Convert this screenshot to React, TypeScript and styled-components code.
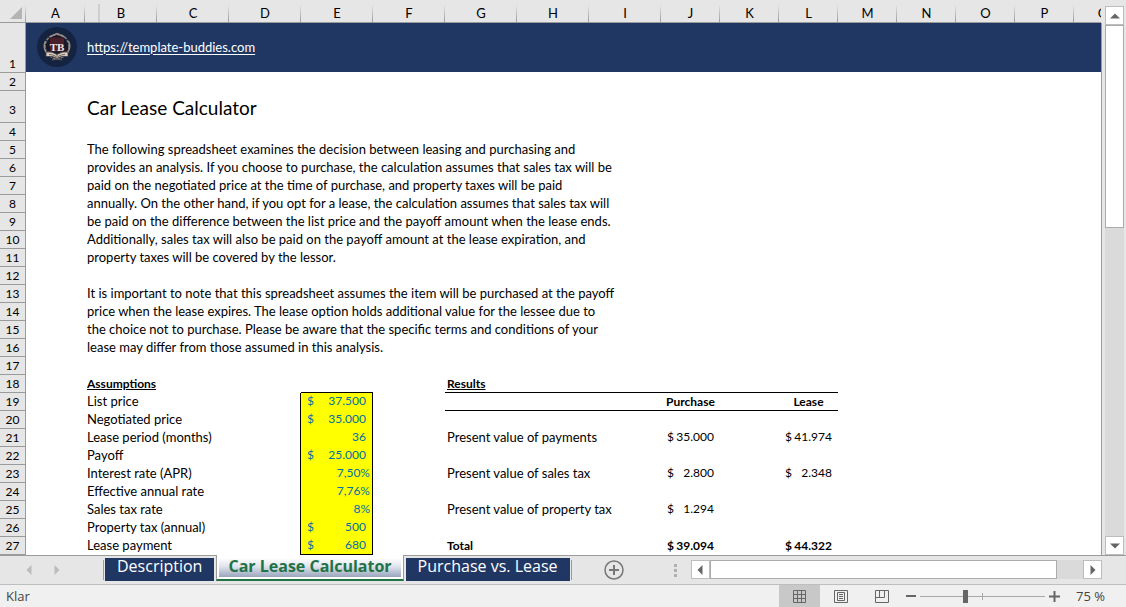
import React from "react";
import styled, { createGlobalStyle, css } from "styled-components";

const cellFont = `Lato, "Liberation Sans", sans-serif`;
const uiFont = `"Open Sans", "Noto Sans", sans-serif`;
const navy = "#203764";
const line = "#9b9b9b";

const GlobalStyle = createGlobalStyle`
  *, *::before, *::after { box-sizing: border-box; }
  body { margin: 0; background: #e6e6e6; }
  button { font: inherit; border: 0; padding: 0; background: none; }
`;

const Window = styled.div`
  display: flex;
  flex-direction: column;
  height: 100vh;
  overflow: hidden;
  background: #e6e6e6;
`;

const Workspace = styled.main`
  flex: 1;
  min-height: 0;
  display: flex;
`;

const SheetView = styled.div`
  flex: 1;
  min-width: 0;
  overflow: hidden;
`;

const Sheet = styled.table`
  table-layout: fixed;
  width: 100%;
  min-width: 1132px;
  border-spacing: 0;
  background: #fff;
  color: #000;
  font: 13px/14px ${cellFont};
`;

const Col = styled.col<{ $w?: number }>`
  width: ${(p) => (p.$w ? `${p.$w}px` : "auto")};
`;

const ColumnHead = styled.th<{ $marked?: boolean }>`
  height: 23px;
  padding: 4px 0 0;
  font-weight: 400;
  font-size: 13px;
  background:
    linear-gradient(#e6e6e6, ${line}) right 4px / 1px 18px no-repeat,
    linear-gradient(#cecece, #cecece) 13px 4px / ${(p) => (p.$marked ? "2px" : "0")} 18px no-repeat,
    #e6e6e6;
  border-bottom: 1px solid ${line};
`;

const Corner = styled(ColumnHead)`
  padding: 0 4px 3px 0;
  text-align: right;
  vertical-align: bottom;
  svg { display: block; margin-left: auto; }
`;

const RowHead = styled.th<{ $raised?: boolean }>`
  padding: 0 0 ${(p) => (p.$raised ? "5px" : "1px")};
  vertical-align: bottom;
  font-weight: 400;
  font-size: 12px;
  background: #e6e6e6;
  border-right: 1px solid ${line};
  border-bottom: 1px solid ${line};
`;

const Row = styled.tr<{ $h?: number }>`
  height: ${(p) => p.$h ?? 18}px;
`;

type CellProps = {
  $bold?: boolean;
  $center?: boolean;
  $under?: boolean;
  $side?: boolean;
  $input?: boolean;
};

const Cell = styled.td<CellProps>`
  padding: 0 2px 2px;
  white-space: nowrap;
  vertical-align: middle;
  text-align: ${(p) => (p.$center ? "center" : "left")};
  ${(p) => p.$bold && css`font-weight: 700; font-size: 12px; padding-bottom: 0;`}
  ${(p) => p.$under && css`border-bottom: 1px solid #000;`}
  ${(p) => p.$side && css`border-right: 1px solid #000;`}
  ${(p) => p.$input && css`background: #ff0; color: #0070a8;`}
`;

const BannerCell = styled.td`
  padding: 0 2px 2px;
  background: ${navy};
  border-bottom: 1px solid #fff;
  vertical-align: middle;
`;

const LogoCell = styled(BannerCell)`
  padding: 0 0 2px 11px;
  svg { display: block; }
`;

const SiteLink = styled.a`
  color: #fff;
  font-size: 13px;
  text-underline-offset: 2px;
`;

const Title = styled.h1`
  margin: 0;
  padding-top: 4px;
  font-size: 19px;
  line-height: 24px;
  font-weight: 400;
`;

const Heading = styled.span`
  text-decoration: underline;
`;

const Amount = styled.span<{ $percent?: boolean }>`
  display: flex;
  justify-content: space-between;
  padding: ${(p) => (p.$percent ? "0" : "0 4px")};
  font-size: 12px;
`;

const VScroll = styled.div`
  width: 25px;
  padding: 6px 3px 0 4px;
  display: flex;
  flex-direction: column;
  background: linear-gradient(${line}, ${line}) 0 23px / 1px 100% no-repeat #e6e6e6;
`;

const ScrollButton = styled.button`
  width: 19px;
  height: 19px;
  flex: none;
  display: flex;
  align-items: center;
  justify-content: center;
  background: #fff;
  border: 1px solid #bdbdbd;
`;

const VTrack = styled.div`
  flex: 1;
  width: 19px;
  background: #dadada;
`;

const VThumb = styled.div`
  height: 203px;
  background: #fff;
  border: 1px solid #ababab;
`;

const TabBar = styled.div`
  flex: none;
  height: 29px;
  display: flex;
  background: #e6e6e6;
`;

const Edge = styled.div<{ $w?: number }>`
  flex: ${(p) => (p.$w ? "none" : "1")};
  width: ${(p) => (p.$w ? `${p.$w}px` : "auto")};
  border-top: 1px solid ${line};
  display: flex;
`;

const NavArrows = styled(Edge)`
  padding: 0 0 0 24px;
  gap: 18px;
  align-items: center;
  button { display: flex; }
`;

const TabSlot = styled.div`
  flex: none;
  padding: 2px 2px 4px;
  border-top: 1px solid ${line};
  background: linear-gradient(${line}, ${line}) var(--side, left) 4px / 1px 20px no-repeat;
`;

const LastSlot = styled(TabSlot)`
  --side: right;
`;

const Tab = styled.button`
  height: 23px;
  padding: 0 12px 8px;
  display: flex;
  align-items: center;
  background: ${navy};
  color: #fff;
  font: 16px/16px ${uiFont};
`;

const ActiveTab = styled.button`
  flex: none;
  height: 26px;
  border: solid ${line};
  border-width: 0 1px;
  padding: 3px 2px 2px;
  background: #fff;
  border-bottom: 2px solid #217346;
`;

const ActiveLabel = styled.span`
  display: flex;
  align-items: center;
  height: 19px;
  padding: 0 9px 3px;
  background: linear-gradient(#fff, #dfe3ec 45%, #9aa5bd);
  color: #217346;
  font: 700 16px/18px ${uiFont};
`;

const AddArea = styled(Edge)`
  padding-left: 32px;
  align-items: center;
  justify-content: space-between;
  button { display: flex; }
`;

const HScroll = styled(Edge)`
  align-items: center;
  padding: 0 24px 1px 14px;
`;

const HTrack = styled.div`
  flex: 1;
  height: 19px;
  background: #dadada;
`;

const HThumb = styled.div`
  width: 93%;
  height: 19px;
  background: #fff;
  border: 1px solid #ababab;
`;

const StatusBar = styled.footer`
  flex: none;
  height: 23px;
  display: flex;
  align-items: center;
  padding: 0 21px 0 6px;
  border-top: 1px solid #bebebe;
  background: #f0f0f0;
  color: #444;
  font: 13px/16px ${uiFont};
`;

const StatusText = styled.span`
  flex: 1;
`;

const ViewButton = styled.button<{ $on?: boolean }>`
  width: 41px;
  height: 22px;
  display: flex;
  align-items: center;
  justify-content: center;
  background: ${(p) => (p.$on ? "#c8c8c8" : "transparent")};
`;

const ZoomButton = styled.button`
  display: flex;
  margin-left: 4px;
`;

const ZoomRange = styled.input`
  appearance: none;
  width: 125px;
  height: 13px;
  margin: 0 0 0 4px;
  background:
    linear-gradient(#a8a8a8, #a8a8a8) center / 1px 7px no-repeat,
    linear-gradient(#a8a8a8, #a8a8a8) center / 100% 1px no-repeat;
  &::-webkit-slider-thumb {
    appearance: none;
    width: 5px;
    height: 13px;
    background: #666;
  }
`;

const ZoomValue = styled.output`
  margin-left: 16px;
`;

const columns = "ABCDEFGHIJKLMNOPQ".split("");
const widths = [59, 72, 72, 72, 72, 72, 72, 72, 72, 59, 59, 59, 59, 59, 59, 59];

const notes: Record<number, string> = {
  5: "The following spreadsheet examines the decision between leasing and purchasing and",
  6: "provides an analysis. If you choose to purchase, the calculation assumes that sales tax will be",
  7: "paid on the negotiated price at the time of purchase, and property taxes will be paid",
  8: "annually. On the other hand, if you opt for a lease, the calculation assumes that sales tax will",
  9: "be paid on the difference between the list price and the payoff amount when the lease ends.",
  10: "Additionally, sales tax will also be paid on the payoff amount at the lease expiration, and",
  11: "property taxes will be covered by the lessor.",
  13: "It is important to note that this spreadsheet assumes the item will be purchased at the payoff",
  14: "price when the lease expires. The lease option holds additional value for the lessee due to",
  15: "the choice not to purchase. Please be aware that the specific terms and conditions of your",
  16: "lease may differ from those assumed in this analysis.",
};
const noteRows = [4, 5, 6, 7, 8, 9, 10, 11, 12, 13, 14, 15, 16, 17];

type Item = { label: string; sign?: string; value: string };
const assumptions: Item[] = [
  { label: "List price", sign: "$", value: "37.500" },
  { label: "Negotiated price", sign: "$", value: "35.000" },
  { label: "Lease period (months)", value: "36" },
  { label: "Payoff", sign: "$", value: "25.000" },
  { label: "Interest rate (APR)", value: "7,50%" },
  { label: "Effective annual rate", value: "7,76%" },
  { label: "Sales tax rate", value: "8%" },
  { label: "Property tax (annual)", sign: "$", value: "500" },
  { label: "Lease payment", sign: "$", value: "680" },
];

type Result = { label: string; purchase: string; lease?: string; bold?: boolean };
const results: Record<number, Result> = {
  21: { label: "Present value of payments", purchase: "35.000", lease: "41.974" },
  23: { label: "Present value of sales tax", purchase: "2.800", lease: "2.348" },
  25: { label: "Present value of property tax", purchase: "1.294" },
  27: { label: "Total", purchase: "39.094", lease: "44.322", bold: true },
};

const Triangle = ({ dir, color = "#666" }: { dir: "up" | "down" | "left" | "right"; color?: string }) => {
  const d = { up: "M0 7.5 5 2.5 10 7.5Z", down: "M0 2.5 5 7.5 10 2.5Z", left: "M7.5 0 2.5 5 7.5 10Z", right: "M2.5 0 7.5 5 2.5 10Z" }[dir];
  return (
    <svg width="10" height="10" aria-hidden="true"><path d={d} fill={color} /></svg>
  );
};

const Logo = () => (
  <svg width="40" height="40" viewBox="0 0 40 40" role="img" aria-label="Template Buddies">
    <circle cx="20" cy="20" r="20" fill="#14233f" />
    <circle cx="20" cy="19.5" r="12" fill="#17182a" stroke="#857c78" strokeWidth="1.6" strokeDasharray="3 1" />
    <path d="M12.5 10 20 6.5 27.5 10M8.5 14q-3 5.5 1 12M31.5 14q3 5.5-1 12" fill="none" stroke="#9a8f88" strokeWidth="1.4" />
    <path d="M13 10.5h14v14H13z" fill="#49202a" />
    <path d="M9 25q6-1 11 2.5 5-3.5 11-2.5v4.5q-7-1-11 2-4-3-11-2z" fill="#dccdbd" stroke="#403b43" strokeWidth=".8" />
    <path d="M20 27v6M12 27.5q4 0 7 2M28 27.5q-4 0-7 2M15 33q5-2 10 0" fill="none" stroke="#6b6162" />
    <text x="20" y="24" textAnchor="middle" fontFamily="Liberation Serif, serif" fontWeight="700" fontSize="11" fill="#e9e7ea">TB</text>
  </svg>
);

const Money = ({ value }: { value: string }) => (
  <Amount><span>$</span><span>{value}</span></Amount>
);

const ResultCells = ({ row }: { row: number }) => {
  if (row === 19) {
    return (
      <>
        <Cell colSpan={3} $under />
        <Cell $under $bold $center>Purchase</Cell>
        <Cell $under />
        <Cell $under $bold $center>Lease</Cell>
      </>
    );
  }
  const r = results[row];
  if (!r) return <Cell colSpan={6} />;
  return (
    <>
      <Cell colSpan={3} $bold={r.bold}>{r.label}</Cell>
      <Cell $bold={r.bold}><Money value={r.purchase} /></Cell>
      <Cell />
      <Cell $bold={r.bold}>{r.lease && <Money value={r.lease} />}</Cell>
    </>
  );
};

export default function App() {
  return (
    <Window>
      <GlobalStyle />
      <Workspace>
        <SheetView>
          <Sheet>
            <colgroup>
              <Col $w={26} />
              {widths.map((w, i) => <Col key={i} $w={w} />)}
              <Col />
            </colgroup>
            <thead>
              <tr>
                <Corner aria-label="Select all">
                  <svg width="12" height="12" aria-hidden="true"><path d="M12 0V12H0Z" fill="#b4b4b4" /></svg>
                </Corner>
                {columns.map((c) => <ColumnHead key={c} scope="col" $marked={c === "B"}>{c}</ColumnHead>)}
              </tr>
            </thead>
            <tbody>
              <Row $h={50}>
                <RowHead scope="row">1</RowHead>
                <LogoCell><Logo /></LogoCell>
                <BannerCell colSpan={16}>
                  <SiteLink href="https://template-buddies.com">https://template-buddies.com</SiteLink>
                </BannerCell>
              </Row>
              <Row>
                <RowHead scope="row">2</RowHead>
                <Cell colSpan={17} />
              </Row>
              <Row $h={32}>
                <RowHead scope="row" $raised>3</RowHead>
                <Cell />
                <Cell colSpan={16}><Title>Car Lease Calculator</Title></Cell>
              </Row>
              {noteRows.map((n) => (
                <Row key={n}>
                  <RowHead scope="row">{n}</RowHead>
                  <Cell />
                  <Cell colSpan={16}>{notes[n]}</Cell>
                </Row>
              ))}
              <Row>
                <RowHead scope="row">18</RowHead>
                <Cell />
                <Cell colSpan={3} $bold><Heading>Assumptions</Heading></Cell>
                <Cell $under />
                <Cell />
                <Cell colSpan={6} $bold $under><Heading>Results</Heading></Cell>
                <Cell colSpan={5} />
              </Row>
              {assumptions.map((a, i) => (
                <Row key={a.label}>
                  <RowHead scope="row">{i + 19}</RowHead>
                  <Cell />
                  <Cell colSpan={3} $side>{a.label}</Cell>
                  <Cell $input $side $under={i === assumptions.length - 1}>
                    <Amount $percent={a.value.endsWith("%")}>
                      <span>{a.sign}</span><span>{a.value}</span>
                    </Amount>
                  </Cell>
                  <Cell />
                  <ResultCells row={i + 19} />
                  <Cell colSpan={5} />
                </Row>
              ))}
            </tbody>
          </Sheet>
        </SheetView>
        <VScroll>
          <ScrollButton aria-label="Scroll up"><Triangle dir="up" /></ScrollButton>
          <VTrack><VThumb /></VTrack>
          <ScrollButton aria-label="Scroll down"><Triangle dir="down" /></ScrollButton>
        </VScroll>
      </Workspace>
      <TabBar>
        <NavArrows $w={103}>
          <button aria-label="Previous sheet"><Triangle dir="left" color="#bcbcbc" /></button>
          <button aria-label="Next sheet"><Triangle dir="right" color="#bcbcbc" /></button>
        </NavArrows>
        <TabSlot><Tab>Description</Tab></TabSlot>
        <ActiveTab><ActiveLabel>Car Lease Calculator</ActiveLabel></ActiveTab>
        <LastSlot><Tab>Purchase vs. Lease</Tab></LastSlot>
        <AddArea $w={105}>
          <button aria-label="New sheet">
            <svg width="20" height="20" aria-hidden="true" fill="none" stroke="#777">
              <circle cx="10" cy="10" r="9" strokeWidth="1.5" />
              <path d="M10 5V15M5 10H15" strokeWidth="2" />
            </svg>
          </button>
          <svg width="3" height="13" aria-hidden="true" fill="#b0b0b0"><path d="M0 0h3v3H0zM0 5h3v3H0zM0 10h3v3H0z" /></svg>
        </AddArea>
        <HScroll>
          <ScrollButton aria-label="Scroll left"><Triangle dir="left" /></ScrollButton>
          <HTrack><HThumb /></HTrack>
          <ScrollButton aria-label="Scroll right"><Triangle dir="right" /></ScrollButton>
        </HScroll>
      </TabBar>
      <StatusBar>
        <StatusText>Klar</StatusText>
        <ViewButton $on aria-label="Normal view">
          <svg width="13" height="13" aria-hidden="true" fill="none" stroke="#666"><path d="M.5.5h12v12H.5zM4.5 0v13M8.5 0v13M0 4.5h13M0 8.5h13" /></svg>
        </ViewButton>
        <ViewButton aria-label="Page layout">
          <svg width="14" height="13" aria-hidden="true" fill="none" stroke="#666"><path d="M.5.5h13v12H.5zM3.5 2.5h7v8h-7zM5 4.5h4M5 6.5h4M5 8.5h4" /></svg>
        </ViewButton>
        <ViewButton aria-label="Page break preview">
          <svg width="14" height="13" aria-hidden="true" fill="none" stroke="#666"><path d="M.5.5h13v12H.5zM4.5 0v7.5M9.5 0v7.5M0 7.5h9.5" /></svg>
        </ViewButton>
        <ZoomButton aria-label="Zoom out">
          <svg width="10" height="10" aria-hidden="true"><path d="M0 4h10v2H0z" fill="#666" /></svg>
        </ZoomButton>
        <ZoomRange type="range" min={10} max={190} defaultValue={75} aria-label="Zoom" />
        <ZoomButton aria-label="Zoom in">
          <svg width="11" height="11" aria-hidden="true"><path d="M0 4.5h11v2H0zM4.5 0h2v11h-2z" fill="#666" /></svg>
        </ZoomButton>
        <ZoomValue>75 %</ZoomValue>
      </StatusBar>
    </Window>
  );
}
